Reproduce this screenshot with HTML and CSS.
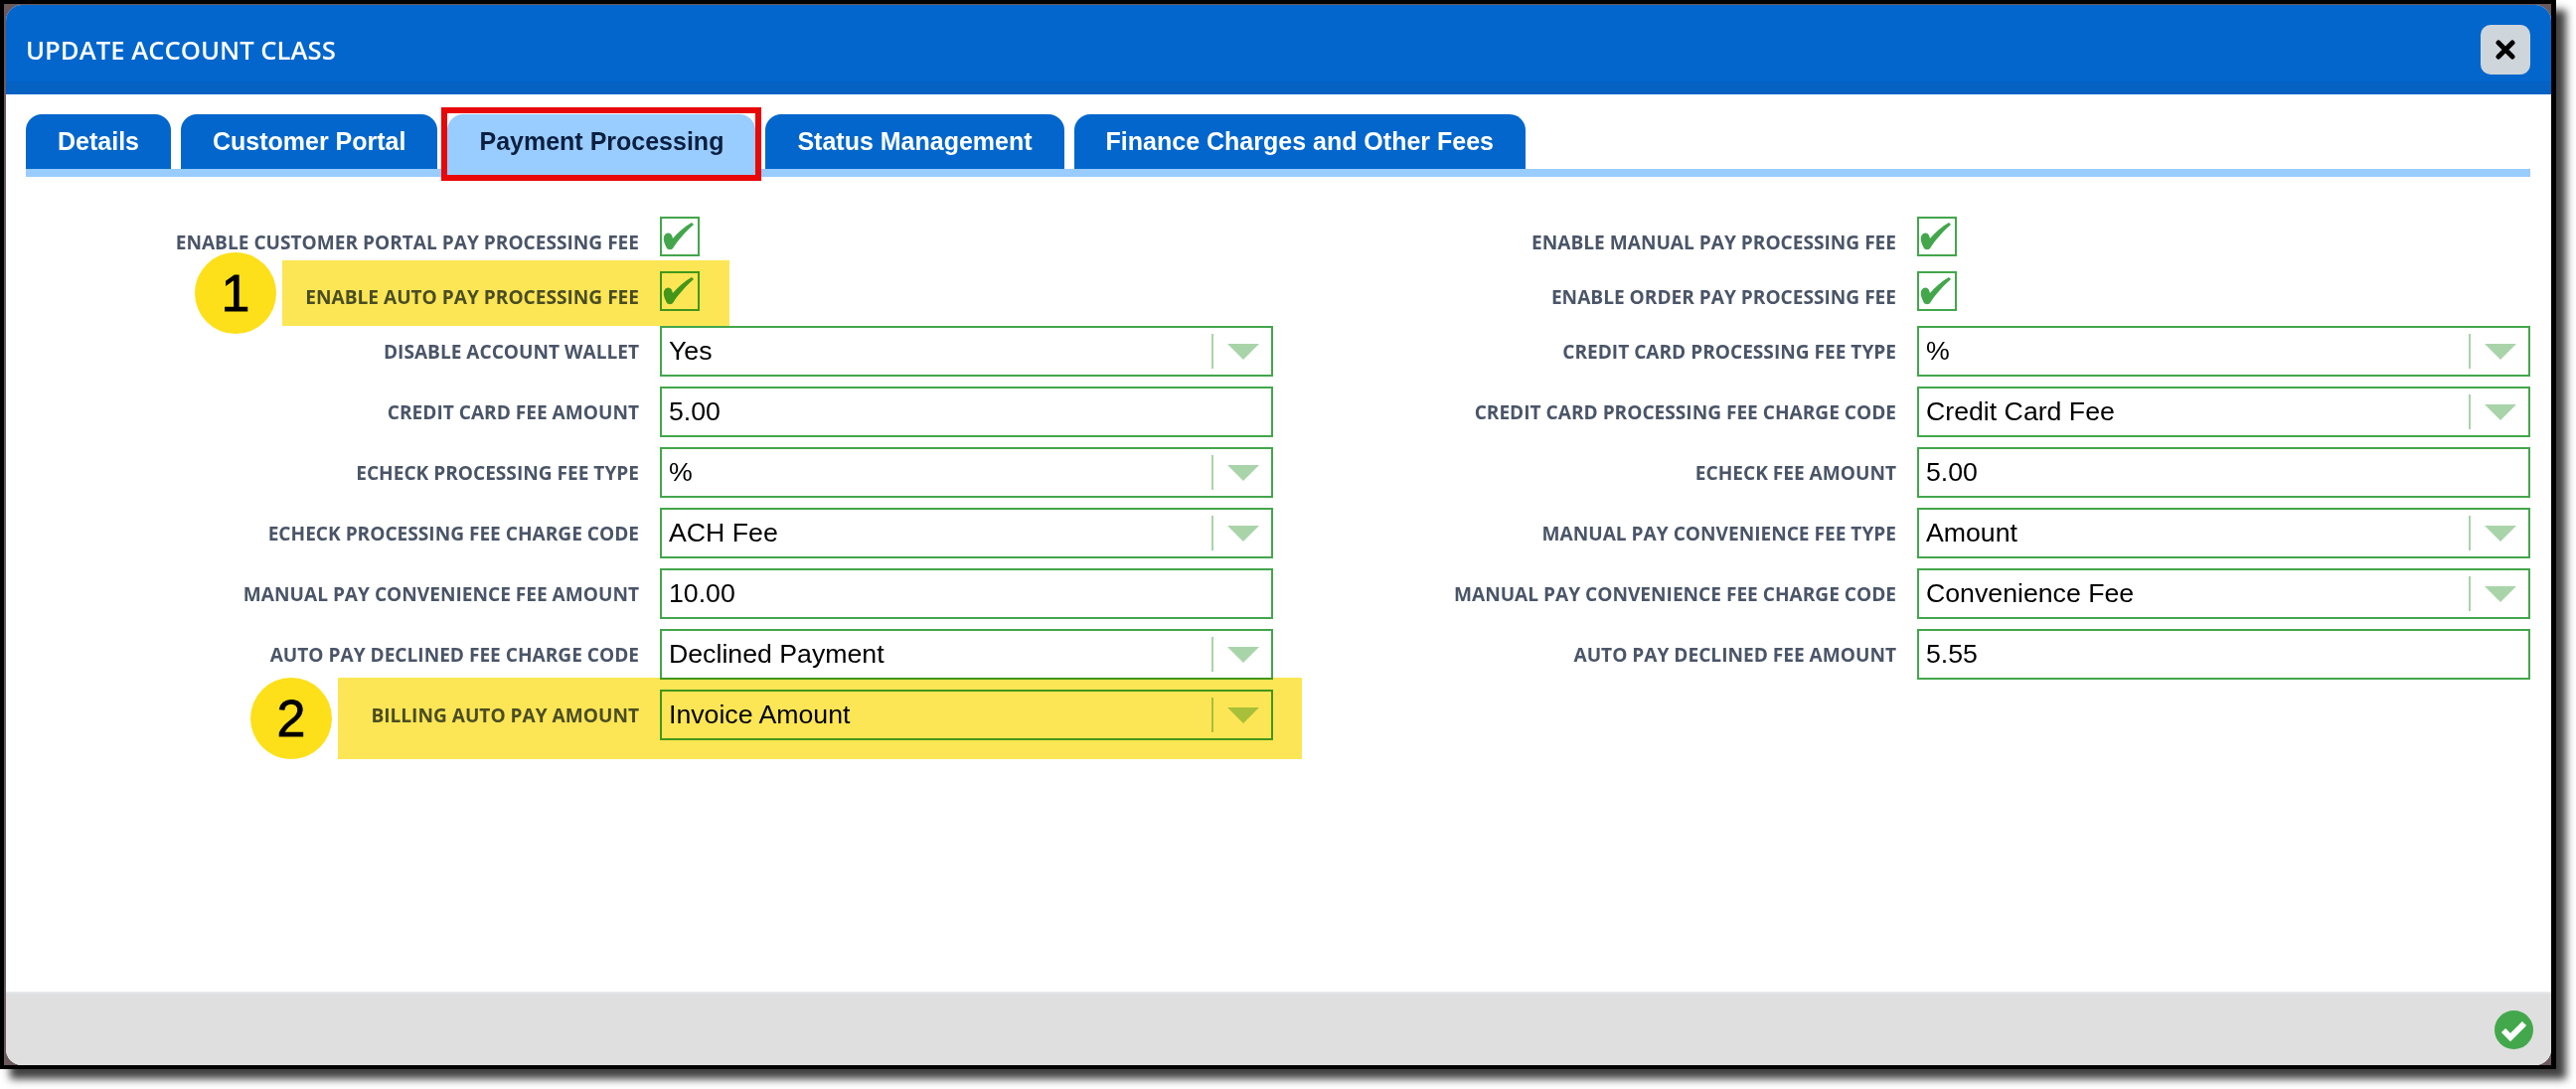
FILE: index.html
```html
<!DOCTYPE html>
<html lang="en">
<head>
    <meta charset="UTF-8">
    <meta name="viewport" content="width=device-width, initial-scale=1.0">
    <title>Update Account Class</title>
    <link rel="stylesheet" href="styles.css">
</head>
<body>
    <div class="screen-frame">
        <div class="modal">
            <div class="modal-header">
                <h2>UPDATE ACCOUNT CLASS</h2>
                <button class="close-button" aria-label="Close">
                    <svg width="20" height="20" viewBox="0 0 20 20"><path d="M3 3L17 17M17 3L3 17" fill="none" stroke="#000" stroke-width="5" stroke-linecap="round"/></svg>
                </button>
            </div>

            <div class="modal-body">
                <div class="tabs">
                    <div class="tab">Details</div>
                    <div class="tab">Customer Portal</div>
                    <div class="tab active">Payment Processing</div>
                    <div class="tab">Status Management</div>
                    <div class="tab">Finance Charges and Other Fees</div>
                    <div class="tab-callout"></div>
                </div>

                <div class="form">
                    <div class="form-column">
                        <div class="form-row check-row">
                            <label>Enable Customer Portal Pay Processing Fee</label>
                            <div class="checkbox"><svg width="36" height="36" viewBox="2 0 36 36"><path d="M4 18C6 13 11 14 12 17L13 20C18 14 25 8 32 4L34 6C26 13 18 22 13 30C11 32 8 31 7 30C5 26 3 22 4 18Z"/></svg></div>
                        </div>
                        <div class="form-row check-row">
                            <label>Enable Auto Pay Processing Fee</label>
                            <div class="checkbox"><svg width="36" height="36" viewBox="2 0 36 36"><path d="M4 18C6 13 11 14 12 17L13 20C18 14 25 8 32 4L34 6C26 13 18 22 13 30C11 32 8 31 7 30C5 26 3 22 4 18Z"/></svg></div>
                        </div>
                        <div class="form-row">
                            <label>Disable Account Wallet</label>
                            <div class="field select">Yes</div>
                        </div>
                        <div class="form-row">
                            <label>Credit Card Fee Amount</label>
                            <div class="field">5.00</div>
                        </div>
                        <div class="form-row">
                            <label>eCheck Processing Fee Type</label>
                            <div class="field select">%</div>
                        </div>
                        <div class="form-row">
                            <label>eCheck Processing Fee Charge Code</label>
                            <div class="field select">ACH Fee</div>
                        </div>
                        <div class="form-row">
                            <label>Manual Pay Convenience Fee Amount</label>
                            <div class="field">10.00</div>
                        </div>
                        <div class="form-row">
                            <label>Auto Pay Declined Fee Charge Code</label>
                            <div class="field select">Declined Payment</div>
                        </div>
                        <div class="form-row">
                            <label>Billing Auto Pay Amount</label>
                            <div class="field select">Invoice Amount</div>
                        </div>
                    </div>

                    <div class="form-column">
                        <div class="form-row check-row">
                            <label>Enable Manual Pay Processing Fee</label>
                            <div class="checkbox"><svg width="36" height="36" viewBox="2 0 36 36"><path d="M4 18C6 13 11 14 12 17L13 20C18 14 25 8 32 4L34 6C26 13 18 22 13 30C11 32 8 31 7 30C5 26 3 22 4 18Z"/></svg></div>
                        </div>
                        <div class="form-row check-row">
                            <label>Enable Order Pay Processing Fee</label>
                            <div class="checkbox"><svg width="36" height="36" viewBox="2 0 36 36"><path d="M4 18C6 13 11 14 12 17L13 20C18 14 25 8 32 4L34 6C26 13 18 22 13 30C11 32 8 31 7 30C5 26 3 22 4 18Z"/></svg></div>
                        </div>
                        <div class="form-row">
                            <label>Credit Card Processing Fee Type</label>
                            <div class="field select">%</div>
                        </div>
                        <div class="form-row">
                            <label>Credit Card Processing Fee Charge Code</label>
                            <div class="field select">Credit Card Fee</div>
                        </div>
                        <div class="form-row">
                            <label>eCheck Fee Amount</label>
                            <div class="field">5.00</div>
                        </div>
                        <div class="form-row">
                            <label>Manual Pay Convenience Fee Type</label>
                            <div class="field select">Amount</div>
                        </div>
                        <div class="form-row">
                            <label>Manual Pay Convenience Fee Charge Code</label>
                            <div class="field select">Convenience Fee</div>
                        </div>
                        <div class="form-row">
                            <label>Auto Pay Declined Fee Amount</label>
                            <div class="field">5.55</div>
                        </div>
                    </div>

                    <!-- callouts drawn on top of the form -->
                    <div class="highlight highlight-one"></div>
                    <div class="highlight highlight-two"></div>
                    <div class="step-badge step-one">1</div>
                    <div class="step-badge step-two">2</div>
                </div>
            </div>

            <div class="modal-footer">
                <svg width="39" height="39" viewBox="0 0 39 39"><circle cx="19.5" cy="19.5" r="19.5" fill="#43a84b"/><path d="M9 20L16 27L30 13" fill="none" stroke="#fff" stroke-width="6"/></svg>
            </div>
        </div>
    </div>
</body>
</html>
```

FILE: styles.css
```css
body {
    margin: 0;
    min-height: 100vh;
    background-color: #ffffff;
    font-family: "Liberation Sans", Arial, sans-serif;
}

.screen-frame {
    box-sizing: border-box;
    width: 2572px;
    height: 1076px;
    border: 4px solid #000000;
    border-right-width: 5px;
    padding: 1px 0 0 2px;
    background-color: #6a5a5e;
    box-shadow: 10px 10px 8px rgba(0, 0, 0, 0.75);
}

.modal {
    display: flex;
    flex-direction: column;
    height: 100%;
    background-color: #ffffff;
    border-radius: 16px;
    overflow: hidden;
}

.modal-header {
    display: flex;
    justify-content: space-between;
    align-items: center;
    flex-shrink: 0;
    box-sizing: border-box;
    height: 90px;
    padding: 0 21px 0 20px;
    background: linear-gradient(#0366cc 86%, #0561c2 86%);
}

.modal-header h2 {
    margin: 0;
    font-family: "Open Sans", sans-serif;
    font-size: 25.7px;
    font-weight: 600;
    color: #ffffff;
}

.close-button {
    display: flex;
    justify-content: center;
    align-items: center;
    width: 50px;
    height: 50px;
    padding: 0;
    border: none;
    border-radius: 10px;
    background-color: #cfd6db;
}

.modal-body {
    flex: 1;
    padding: 20px 21px 0 20px;
}

.tabs {
    position: relative;
    display: flex;
    gap: 10px;
    padding-bottom: 8px;
    background: linear-gradient(#99ccff, #99ccff) left bottom / 100% 8px no-repeat;
}

.tab {
    height: 55px;
    padding: 0 32px;
    border-radius: 16px 16px 0 0;
    background-color: #0366cc;
    color: #ffffff;
    font-size: 25px;
    font-weight: bold;
    line-height: 55px;
}

.tab.active {
    background-color: #99ccff;
    color: #0b1f3f;
}

.tab-callout {
    position: absolute;
    left: 418px;
    top: -7px;
    box-sizing: border-box;
    width: 322px;
    height: 74px;
    border: 6px solid #e80808;
}

.form {
    position: relative;
    display: grid;
    grid-template-columns: 1fr 1fr;
    column-gap: 10px;
    margin-top: 40px;
}

.form-row {
    display: flex;
    align-items: center;
    gap: 21px;
    margin-bottom: 10px;
}

.form-row label {
    width: 617px;
    flex-shrink: 0;
    text-align: right;
    font-family: "Open Sans", sans-serif;
    font-size: 19.1px;
    font-weight: 700;
    text-transform: uppercase;
    color: #4a5568;
}

.check-row {
    margin-bottom: 15px;
}

.check-row label {
    padding-top: 12px;
}

.checkbox {
    display: flex;
    justify-content: center;
    align-items: center;
    box-sizing: border-box;
    width: 40px;
    height: 40px;
    border: 2px solid #43a64b;
    fill: #43a64b;
}

.field {
    position: relative;
    flex: 1;
    box-sizing: border-box;
    height: 51px;
    padding-left: 7px;
    border: 2px solid #43a64b;
    font-size: 26.7px;
    line-height: 47px;
    color: #000000;
}

/* divider and arrow of the dropdowns */
.select::before {
    content: "";
    position: absolute;
    right: 58px;
    top: 6px;
    bottom: 6px;
    width: 2px;
    background-color: #a9d4a9;
}

.select::after {
    content: "";
    position: absolute;
    right: 12px;
    top: 16px;
    border-left: 16px solid transparent;
    border-right: 16px solid transparent;
    border-top: 16px solid #a9d4a9;
}

.highlight {
    position: absolute;
    background-color: #fde655;
    mix-blend-mode: multiply;
}

.highlight-one {
    left: 258px;
    top: 44px;
    width: 450px;
    height: 66px;
}

.highlight-two {
    left: 314px;
    top: 464px;
    width: 970px;
    height: 82px;
}

.step-badge {
    position: absolute;
    width: 82px;
    height: 82px;
    border-radius: 50%;
    background-color: #fde01a;
    color: #000000;
    font-size: 52px;
    line-height: 82px;
    text-align: center;
    -webkit-text-stroke: 0.8px #000000;
}

.step-one {
    left: 170px;
    top: 36px;
}

.step-two {
    left: 226px;
    top: 464px;
}

.modal-footer {
    display: flex;
    justify-content: flex-end;
    align-items: center;
    flex-shrink: 0;
    box-sizing: border-box;
    height: 74px;
    padding: 0 18px 0 0;
    border-top: 2px solid #e5e8ea;
    background-color: #dfdfdf;
}
```
